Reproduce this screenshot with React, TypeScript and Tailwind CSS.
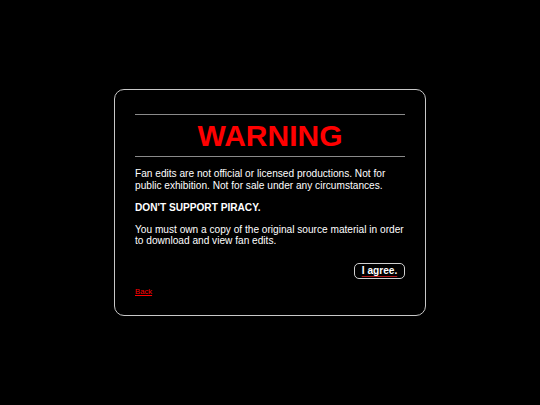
import React from "react";

export default function App() {
  return (
    <div
      className="w-[540px] h-[405px] bg-black flex items-center justify-center"
      style={{ fontFamily: '"Liberation Sans", Arial, sans-serif' }}
    >
      <div className="w-[312px] border border-[#c8c8c8] rounded-[10px] bg-black pt-[24px] pb-[18px] px-[20px] text-white text-[10.15px] leading-[11.66px]">
        <div className="h-px bg-[#8a8a8a]" />
        <h1 className="text-[#ff0000] font-bold text-center text-[30px] leading-[34px] my-[3.6px]">
          WARNING
        </h1>
        <div className="h-px bg-[#8a8a8a]" />
        <p className="mt-[11px]">
          Fan edits are not official or licensed productions. Not for public exhibition. Not for sale under any circumstances.
        </p>
        <p className="mt-[10.15px] font-bold">DON'T SUPPORT PIRACY.</p>
        <p className="mt-[10.15px]">
          You must own a copy of the original source material in order to download and view fan edits.
        </p>
        <div className="flex justify-end mt-[16px]">
          <button className="h-[16px] w-[51px] border border-[#d0d0d0] rounded-[5px] bg-black text-white font-bold text-[10.15px] leading-[14px] flex items-center justify-center">
            <span className="underline decoration-[#b01818] decoration-1 underline-offset-[2px]">I agree.</span>
          </button>
        </div>
        <div className="mt-[9px] text-[7.7px] leading-[8.74px]">
          <a href="#" className="text-[#ff0000] underline">
            Back
          </a>
        </div>
      </div>
    </div>
  );
}
